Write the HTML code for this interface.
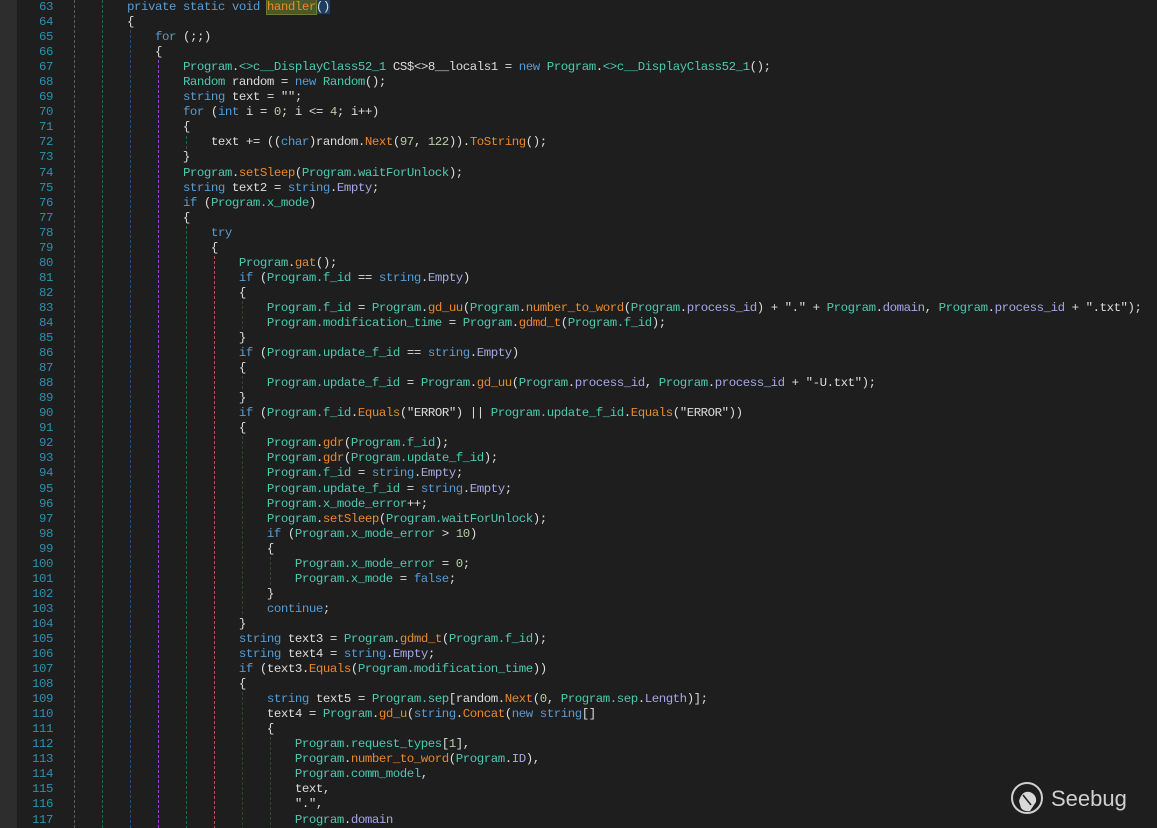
<!DOCTYPE html>
<html><head><meta charset="utf-8"><style>
html,body{margin:0;padding:0;background:#1e1e1e;width:1157px;height:828px;overflow:hidden;position:relative}
.strip{position:absolute;left:0;top:0;width:17px;height:828px;background:#2d2d2d}
pre{margin:0;position:absolute;top:0;font-family:"Liberation Mono",monospace;font-size:12.4px;letter-spacing:-0.44px;line-height:15.05px;color:#dcdcdc}
#ln{left:20px;width:33px;text-align:right;color:#2b91af}
#code{left:71px}
.k{color:#569cd6}.t{color:#4ec9b0}.m{color:#e8892f}.f{color:#a7a7e8}.n{color:#b5cea8}
.hl{background:#4a5a25;outline:1px solid #6a7a35;color:#e8892f}
.pb{background:#1f3d5e}
.g{position:absolute;width:1px}
.gray{background:repeating-linear-gradient(#5a5a5a 0 3px,transparent 3px 5px)}
.grn{background:repeating-linear-gradient(#1f6a3a 0 3px,transparent 3px 5px)}
.blu{background:repeating-linear-gradient(#1f4f7a 0 3px,transparent 3px 5px)}
.pur{background:repeating-linear-gradient(#9a40d8 0 3px,transparent 3px 5px)}
.red{background:repeating-linear-gradient(#c0504d 0 3px,transparent 3px 5px)}
.dg{background:repeating-linear-gradient(#2a4a30 0 3px,transparent 3px 5px)}
</style></head><body>
<div class="strip"></div>
<div class="g gray" style="left:74px;top:0;height:828px"></div>
<div class="g grn" style="left:102px;top:0;height:828px"></div>
<div class="g blu" style="left:130px;top:30px;height:798px"></div>
<div class="g pur" style="left:158px;top:60px;height:768px"></div>
<div class="g grn" style="left:186px;top:136px;height:14px"></div>
<div class="g grn" style="left:186px;top:226px;height:602px"></div>
<div class="g red" style="left:214px;top:256px;height:572px"></div>
<div class="g dg" style="left:242px;top:301px;height:30px"></div>
<div class="g dg" style="left:242px;top:376px;height:15px"></div>
<div class="g dg" style="left:242px;top:436px;height:180px"></div>
<div class="g dg" style="left:270px;top:557px;height:30px"></div>
<div class="g dg" style="left:242px;top:692px;height:136px"></div>
<div class="g dg" style="left:270px;top:737px;height:91px"></div>
<pre id="ln">63
64
65
66
67
68
69
70
71
72
73
74
75
76
77
78
79
80
81
82
83
84
85
86
87
88
89
90
91
92
93
94
95
96
97
98
99
100
101
102
103
104
105
106
107
108
109
110
111
112
113
114
115
116
117</pre>
<pre id="code">        <span class="k">private static void</span> <span class="hl">handler</span><span class="pb">()</span>
        {
            <span class="k">for</span> (;;)
            {
                <span class="t">Program</span>.<span class="t">&lt;&gt;c__DisplayClass52_1</span> CS$&lt;&gt;8__locals1 = <span class="k">new</span> <span class="t">Program</span>.<span class="t">&lt;&gt;c__DisplayClass52_1</span>();
                <span class="t">Random</span> random = <span class="k">new</span> <span class="t">Random</span>();
                <span class="k">string</span> text = "";
                <span class="k">for</span> (<span class="k">int</span> i = <span class="n">0</span>; i &lt;= <span class="n">4</span>; i++)
                {
                    text += ((<span class="k">char</span>)random.<span class="m">Next</span>(<span class="n">97</span>, <span class="n">122</span>)).<span class="m">ToString</span>();
                }
                <span class="t">Program</span>.<span class="m">setSleep</span>(<span class="t">Program.waitForUnlock</span>);
                <span class="k">string</span> text2 = <span class="k">string</span>.<span class="f">Empty</span>;
                <span class="k">if</span> (<span class="t">Program.x_mode</span>)
                {
                    <span class="k">try</span>
                    {
                        <span class="t">Program</span>.<span class="m">gat</span>();
                        <span class="k">if</span> (<span class="t">Program.f_id</span> == <span class="k">string</span>.<span class="f">Empty</span>)
                        {
                            <span class="t">Program.f_id</span> = <span class="t">Program</span>.<span class="m">gd_uu</span>(<span class="t">Program</span>.<span class="m">number_to_word</span>(<span class="t">Program</span>.<span class="f">process_id</span>) + "." + <span class="t">Program</span>.<span class="f">domain</span>, <span class="t">Program</span>.<span class="f">process_id</span> + ".txt");
                            <span class="t">Program.modification_time</span> = <span class="t">Program</span>.<span class="m">gdmd_t</span>(<span class="t">Program.f_id</span>);
                        }
                        <span class="k">if</span> (<span class="t">Program.update_f_id</span> == <span class="k">string</span>.<span class="f">Empty</span>)
                        {
                            <span class="t">Program.update_f_id</span> = <span class="t">Program</span>.<span class="m">gd_uu</span>(<span class="t">Program</span>.<span class="f">process_id</span>, <span class="t">Program</span>.<span class="f">process_id</span> + "-U.txt");
                        }
                        <span class="k">if</span> (<span class="t">Program.f_id</span>.<span class="m">Equals</span>("ERROR") || <span class="t">Program.update_f_id</span>.<span class="m">Equals</span>("ERROR"))
                        {
                            <span class="t">Program</span>.<span class="m">gdr</span>(<span class="t">Program.f_id</span>);
                            <span class="t">Program</span>.<span class="m">gdr</span>(<span class="t">Program.update_f_id</span>);
                            <span class="t">Program.f_id</span> = <span class="k">string</span>.<span class="f">Empty</span>;
                            <span class="t">Program.update_f_id</span> = <span class="k">string</span>.<span class="f">Empty</span>;
                            <span class="t">Program.x_mode_error</span>++;
                            <span class="t">Program</span>.<span class="m">setSleep</span>(<span class="t">Program.waitForUnlock</span>);
                            <span class="k">if</span> (<span class="t">Program.x_mode_error</span> &gt; <span class="n">10</span>)
                            {
                                <span class="t">Program.x_mode_error</span> = <span class="n">0</span>;
                                <span class="t">Program.x_mode</span> = <span class="k">false</span>;
                            }
                            <span class="k">continue</span>;
                        }
                        <span class="k">string</span> text3 = <span class="t">Program</span>.<span class="m">gdmd_t</span>(<span class="t">Program.f_id</span>);
                        <span class="k">string</span> text4 = <span class="k">string</span>.<span class="f">Empty</span>;
                        <span class="k">if</span> (text3.<span class="m">Equals</span>(<span class="t">Program.modification_time</span>))
                        {
                            <span class="k">string</span> text5 = <span class="t">Program.sep</span>[random.<span class="m">Next</span>(<span class="n">0</span>, <span class="t">Program.sep</span>.<span class="f">Length</span>)];
                            text4 = <span class="t">Program</span>.<span class="m">gd_u</span>(<span class="k">string</span>.<span class="m">Concat</span>(<span class="k">new string</span>[]
                            {
                                <span class="t">Program.request_types</span>[<span class="n">1</span>],
                                <span class="t">Program</span>.<span class="m">number_to_word</span>(<span class="t">Program</span>.<span class="f">ID</span>),
                                <span class="t">Program.comm_model</span>,
                                text,
                                ".",
                                <span class="t">Program</span>.<span class="f">domain</span></pre>
<svg style="position:absolute;left:1010px;top:781px" width="120" height="36" viewBox="0 0 120 36">
<circle cx="17" cy="17" r="15" fill="none" stroke="#cfcfcf" stroke-width="2"/>
<path d="M9 20 Q12 9 20 11 Q27 14 26 21 L20 30 Q14 31 11 27 Z" fill="#d8d8d8"/>
<path d="M13 14 L21 24" stroke="#1e1e1e" stroke-width="1.5"/>
<text x="41" y="25" font-family="Liberation Sans,sans-serif" font-size="22" fill="#d0d0d0">Seebug</text>
</svg>
</body></html>
